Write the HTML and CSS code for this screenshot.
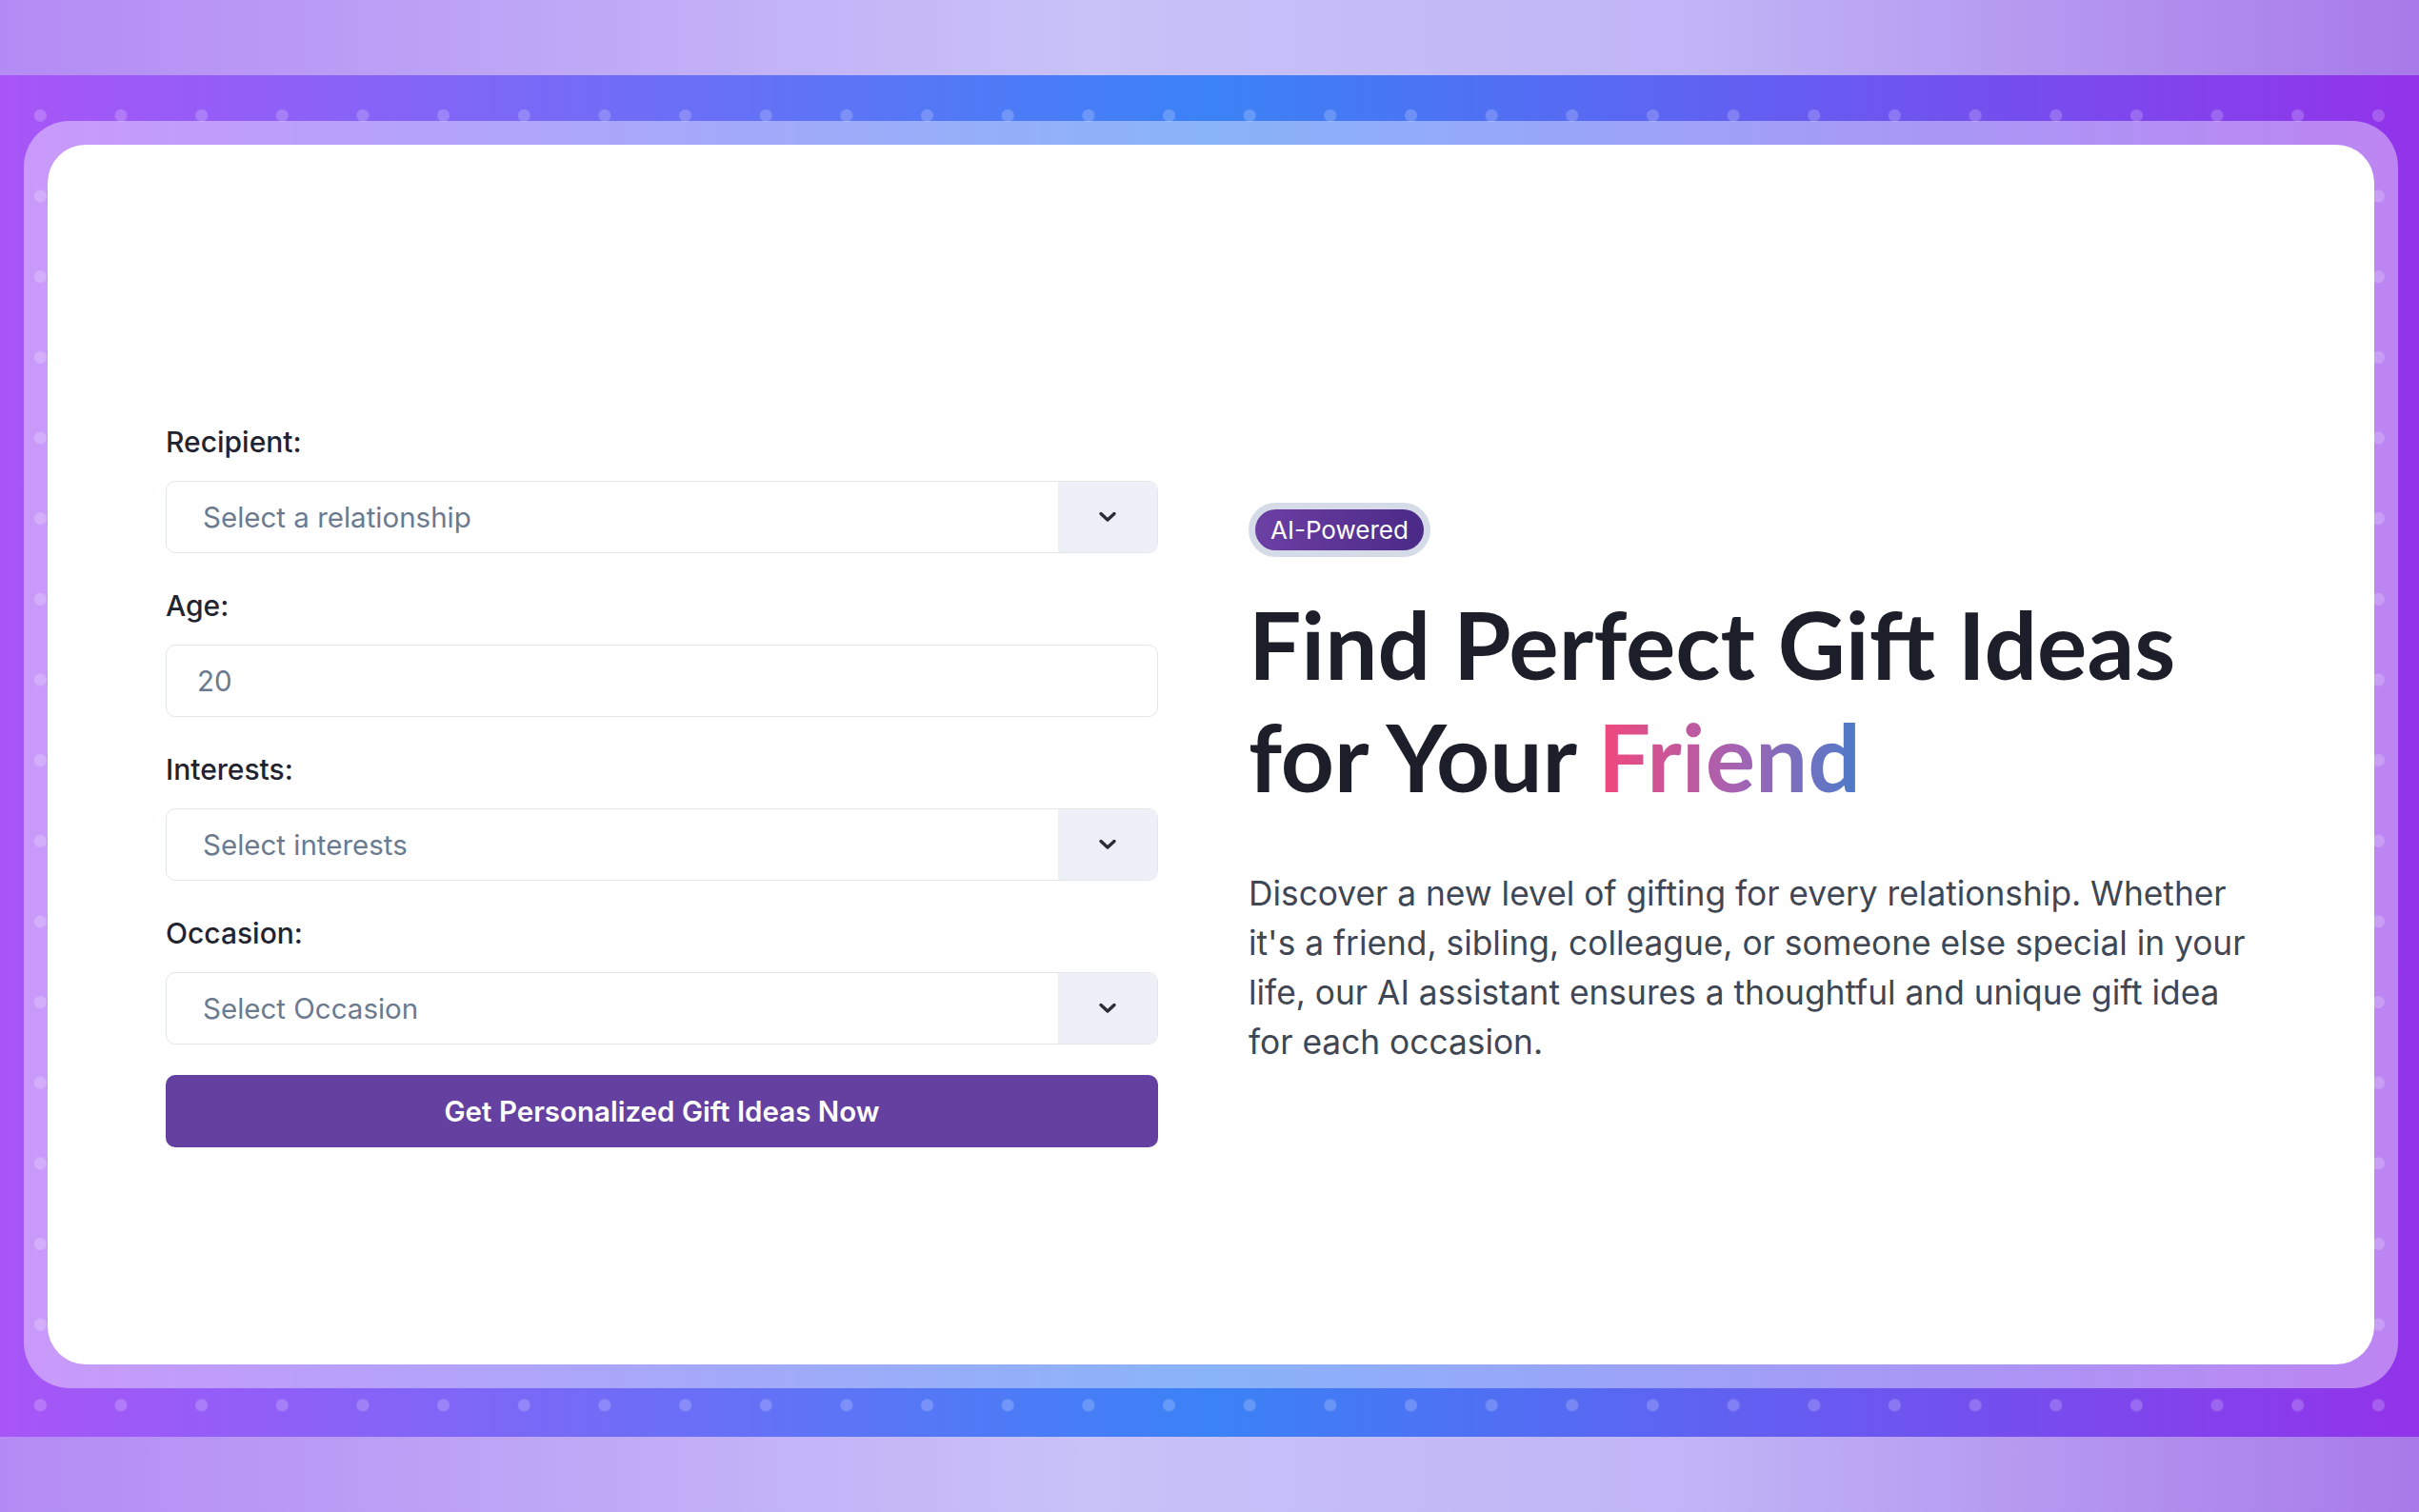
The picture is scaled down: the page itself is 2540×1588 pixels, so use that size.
FILE: index.html
```html
<!DOCTYPE html>
<html lang="en">
<head>
    <meta charset="UTF-8">
    <meta name="viewport" content="width=device-width, initial-scale=1.0">
    <title>AI Gift Finder</title>
    <link rel="stylesheet" href="styles.css">
</head>
<body>
    <div class="stage">
        <div class="frame">
            <div class="card">

                <!-- Formulario -->
                <form class="gift-form" action="#">
                    <div class="field">
                        <label for="recipient">Recipient:</label>
                        <div class="select-wrap">
                            <select id="recipient" name="recipient">
                                <option>Select a relationship</option>
                                <option>Friend</option>
                                <option>Sibling</option>
                                <option>Colleague</option>
                            </select>
                            <span class="select-arrow">
                                <svg width="20" height="12" viewBox="0 0 20 12"><path d="M3 2.5 L10 9 L17 2.5" fill="none" stroke="#2a2e36" stroke-width="3.4" stroke-linecap="round" stroke-linejoin="round"/></svg>
                            </span>
                        </div>
                    </div>

                    <div class="field">
                        <label for="age">Age:</label>
                        <input type="text" id="age" name="age" value="20">
                    </div>

                    <div class="field">
                        <label for="interests">Interests:</label>
                        <div class="select-wrap">
                            <select id="interests" name="interests">
                                <option>Select interests</option>
                                <option>Books</option>
                                <option>Music</option>
                                <option>Sports</option>
                            </select>
                            <span class="select-arrow">
                                <svg width="20" height="12" viewBox="0 0 20 12"><path d="M3 2.5 L10 9 L17 2.5" fill="none" stroke="#2a2e36" stroke-width="3.4" stroke-linecap="round" stroke-linejoin="round"/></svg>
                            </span>
                        </div>
                    </div>

                    <div class="field last">
                        <label for="occasion">Occasion:</label>
                        <div class="select-wrap">
                            <select id="occasion" name="occasion">
                                <option>Select Occasion</option>
                                <option>Birthday</option>
                                <option>Anniversary</option>
                                <option>Holiday</option>
                            </select>
                            <span class="select-arrow">
                                <svg width="20" height="12" viewBox="0 0 20 12"><path d="M3 2.5 L10 9 L17 2.5" fill="none" stroke="#2a2e36" stroke-width="3.4" stroke-linecap="round" stroke-linejoin="round"/></svg>
                            </span>
                        </div>
                    </div>

                    <button type="submit">Get Personalized Gift Ideas Now</button>
                </form>

                <!-- Texto -->
                <div class="intro">
                    <span class="badge">AI-Powered</span>
                    <h1>Find Perfect Gift Ideas<br>for Your <span class="highlight">Friend</span></h1>
                    <p>Discover a new level of gifting for every relationship. Whether it's a friend, sibling, colleague, or someone else special in your life, our AI assistant ensures a thoughtful and unique gift idea for each occasion.</p>
                </div>

            </div>
        </div>
    </div>
</body>
</html>
```

FILE: styles.css
```css
body {
    margin: 0;
    padding: 79px 0;
    font-family: Inter, "Liberation Sans", sans-serif;
    background: linear-gradient(90deg, #b48bf4 0%, #c8c2f8 45%, #c0b4f6 70%, #a87ae9 100%);
}

.stage {
    height: 1430px;
    box-sizing: border-box;
    padding: 48px 22px 51px 25px;
    background:
        radial-gradient(circle, rgba(255, 255, 255, 0.2) 6px, transparent 7px) 0 0 / 84.66px 84.66px,
        linear-gradient(90deg, #a855f7 0%, #3b82f6 50%, #9333ea 100%);
}

.frame {
    height: 100%;
    box-sizing: border-box;
    padding: 25px;
    border-radius: 48px;
    background: rgba(255, 255, 255, 0.4);
}

.card {
    height: 100%;
    box-sizing: border-box;
    padding: 64px 124px 0;
    background: #fff;
    border-radius: 40px;
    display: grid;
    grid-template-columns: 1042px 1fr;
    column-gap: 95px;
    align-items: center;
}

.field {
    margin-bottom: 36px;
}

.field.last {
    margin-bottom: 32px;
}

label {
    display: block;
    font-size: 30px;
    line-height: 39px;
    font-weight: 500;
    color: #1f2430;
    margin-bottom: 21px;
}

.select-wrap {
    display: flex;
    height: 76px;
    box-sizing: border-box;
    border: 1px solid #e2e6ec;
    border-radius: 10px;
    overflow: hidden;
    background: #fff;
}

select {
    flex: 1;
    appearance: none;
    -webkit-appearance: none;
    border: none;
    outline: none;
    background: transparent;
    padding: 0 38px;
    font-family: inherit;
    font-size: 29.5px;
    color: #6b7a8f;
}

.select-arrow {
    width: 104px;
    display: flex;
    align-items: center;
    justify-content: center;
    background: #edf1f7;
}

input[type="text"] {
    display: block;
    width: 100%;
    height: 76px;
    box-sizing: border-box;
    border: 1px solid #e2e6ec;
    border-radius: 10px;
    padding: 0 32px;
    font-family: inherit;
    font-size: 29.5px;
    color: #6b7a8f;
    outline: none;
}

button {
    display: block;
    width: 100%;
    height: 76px;
    border: none;
    border-radius: 10px;
    background: #6441a0;
    color: #fff;
    font-family: inherit;
    font-size: 29.5px;
    font-weight: 600;
    cursor: pointer;
}

.badge {
    display: inline-block;
    border: 7px solid #d5dce8;
    border-radius: 999px;
    padding: 0 16px;
    line-height: 43px;
    font-size: 26px;
    color: #fff;
    background: linear-gradient(90deg, #6c3fa4, #4b2a87);
}

h1 {
    margin: 32px 0 60px;
    font-family: Lato, "Liberation Sans", sans-serif;
    font-size: 98px;
    line-height: 118px;
    font-weight: 700;
    color: #1c1f2a;
}

.highlight {
    background: linear-gradient(90deg, #f2477b, #a164b4 55%, #4a7cca);
    -webkit-background-clip: text;
    background-clip: text;
    color: transparent;
}

.intro p {
    max-width: 1050px;
    margin: 0;
    font-size: 35.3px;
    line-height: 52px;
    color: #3f4654;
}
```
